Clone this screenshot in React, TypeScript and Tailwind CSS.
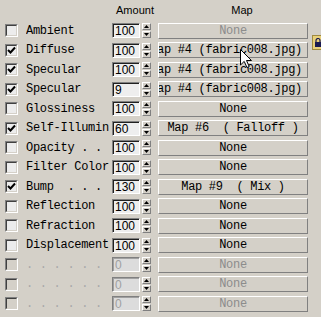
import React from "react";

type Row = {
  label: string;
  checked: boolean;
  amount: string;
  map: string;
  mapDisabled?: boolean;
  disabled?: boolean;
};

const rows: Row[] = [
  { label: "Ambient", checked: false, amount: "100", map: "None", mapDisabled: true },
  { label: "Diffuse", checked: true, amount: "100", map: "Map #4 (fabric008.jpg)  " },
  { label: "Specular", checked: true, amount: "100", map: "Map #4 (fabric008.jpg)  " },
  { label: "Specular", checked: true, amount: "9", map: "Map #4 (fabric008.jpg)  " },
  { label: "Glossiness", checked: false, amount: "100", map: "None" },
  { label: "Self-Illumination", checked: true, amount: "60", map: "Map #6  ( Falloff )" },
  { label: "Opacity . .", checked: false, amount: "100", map: "None" },
  { label: "Filter Color", checked: false, amount: "100", map: "None" },
  { label: "Bump  . . .", checked: true, amount: "130", map: "Map #9  ( Mix )" },
  { label: "Reflection", checked: false, amount: "100", map: "None" },
  { label: "Refraction", checked: false, amount: "100", map: "None" },
  { label: "Displacement", checked: false, amount: "100", map: "None" },
  { label: ". . . . . .", checked: false, amount: "0", map: "None", mapDisabled: true, disabled: true },
  { label: ". . . . . .", checked: false, amount: "0", map: "None", mapDisabled: true, disabled: true },
  { label: ". . . . . .", checked: false, amount: "0", map: "None", mapDisabled: true, disabled: true },
];

function Check({ checked, disabled }: { checked: boolean; disabled?: boolean }) {
  return (
    <div
      className={`w-[13px] h-[13px] shrink-0 border-t border-l border-t-[#808080] border-l-[#808080] border-b border-r border-b-white border-r-white ${
        disabled ? "bg-[#d4d0c8]" : "bg-[#ececec]"
      }`}
    >
      <div className="w-full h-full border-t border-l border-t-[#404040] border-l-[#404040] border-b border-r border-b-[#d4d0c8] border-r-[#d4d0c8] flex items-center justify-center">
        {checked && (
          <svg width="9" height="9" viewBox="0 0 9 9">
            <path d="M1 4 L3.5 6.5 L8 1.5" stroke="#000" strokeWidth="2" fill="none" />
          </svg>
        )}
      </div>
    </div>
  );
}

function Spinner() {
  return (
    <div className="w-[9px] h-[15px] flex flex-col justify-between shrink-0">
      <div className="h-[7px] bg-[#d4d0c8] border-t border-l border-t-white border-l-white border-b border-r border-b-[#808080] border-r-[#808080] flex items-center justify-center">
        <svg width="5" height="3" viewBox="0 0 5 3">
          <path d="M2.5 0 L5 3 L0 3 Z" fill="#000" />
        </svg>
      </div>
      <div className="h-[7px] bg-[#d4d0c8] border-t border-l border-t-white border-l-white border-b border-r border-b-[#808080] border-r-[#808080] flex items-center justify-center">
        <svg width="5" height="3" viewBox="0 0 5 3">
          <path d="M0 0 L5 0 L2.5 3 Z" fill="#000" />
        </svg>
      </div>
    </div>
  );
}

export default function App() {
  return (
    <div className="relative w-[321px] h-[317px] overflow-hidden bg-[#d4d0c8] text-black">
      <div className="h-[21px] flex items-start pt-[4px] text-[11px] leading-[13px] font-['Liberation_Sans',Arial,sans-serif]">
        <div className="w-[112px] shrink-0" />
        <div className="w-[46px] shrink-0 text-center">Amount</div>
        <div className="w-[168px] shrink-0 text-center">Map</div>
      </div>
      {rows.map((r, i) => (
        <div key={i} className="h-[19.5px] flex items-center pl-[5px]">
          <Check checked={r.checked} disabled={r.disabled} />
          <div className="ml-[8px] w-[86px] shrink-0">
            <div
              className={`w-[83px] overflow-hidden whitespace-pre text-[12px] tracking-[-0.3px] leading-[14px] font-['Liberation_Mono','Courier_New',monospace] ${
                r.disabled ? "text-[#a8a8a8]" : "text-black"
              }`}
            >
              {r.label}
            </div>
          </div>
          <div className="w-[28px] h-[15px] shrink-0 border-t border-l border-b border-r border-t-[#808080] border-l-[#808080] border-b-white border-r-white">
            <div
              className={`w-full h-full border-t border-l ${
                r.disabled
                  ? "border-t-[#a0a0a0] border-l-[#a0a0a0] bg-[#dcdcdc] text-[#a0a0a0]"
                  : "border-t-[#202020] border-l-[#202020] bg-[#eeeeee] text-black"
              } pl-[1px] text-[12px] leading-[13px] font-['Liberation_Sans',Arial,sans-serif]`}
            >
              {r.amount}
            </div>
          </div>
          <div className="ml-[2px]">
            <Spinner />
          </div>
          <div className="ml-[7px] w-[150px] h-[16px] shrink-0 border-t border-l border-t-white border-l-white border-b border-r border-b-[#808080] border-r-[#808080] bg-[#d4d0c8] overflow-hidden flex items-center justify-center">
            <span
              className={`whitespace-pre text-[12px] tracking-[-0.3px] leading-[14px] font-['Liberation_Mono','Courier_New',monospace] ${
                r.mapDisabled ? "text-[#8c8c8c]" : "text-black"
              }`}
            >
              {r.map}
            </span>
          </div>
        </div>
      ))}
      <div className="absolute left-[312px] top-[35px] w-[12px] h-[15px] bg-[#e8d07a] border border-[#a08a40] flex items-center justify-center">
        <svg width="8" height="9" viewBox="0 0 8 9">
          <path d="M2 4 V2.5 A2 2 0 0 1 6 2.5 V4" stroke="#1a1a50" strokeWidth="1.2" fill="none" />
          <rect x="1" y="4" width="6" height="5" fill="#1a1a50" />
        </svg>
      </div>
      <svg className="absolute left-[240px] top-[49px]" width="13" height="20" viewBox="0 0 13 20">
        <path d="M0.5 0.5 L0.5 16 L4.2 12.4 L7 18.5 L9.2 17.5 L6.5 11.5 L11.5 11.5 Z" fill="#fff" stroke="#000" strokeWidth="1" />
      </svg>
    </div>
  );
}
